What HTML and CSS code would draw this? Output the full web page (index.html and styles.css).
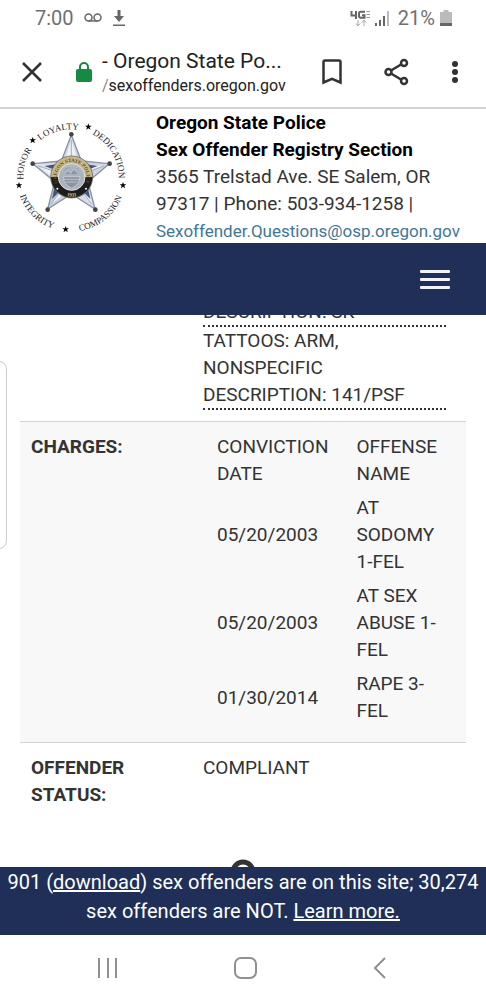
FILE: index.html
```html
<!DOCTYPE html>
<html lang="en">
<head>
  <meta charset="utf-8">
  <title>Oregon State Police - Sex Offender Registry</title>
  <meta name="viewport" content="width=device-width, initial-scale=1">
  <link rel="stylesheet" href="styles.css">
</head>
<body>
  <!-- Phone status bar -->
  <div class="status-bar">
    <span class="clock">7:00</span>
    <svg class="voicemail" width="18" height="12" viewBox="0 0 18 12"><path d="M4.500 9h9" /><circle cx="4.500" cy="5.500" r="3.500" /><circle cx="13.500" cy="5.500" r="3.500" /></svg>
    <svg class="download" width="14" height="18" viewBox="0 0 14 18"><path d="M5.500 1h3v6H12L7 13 2 7h3.500zM1 15.500h12V17H1z" /></svg>
    <span class="spacer"></span>
    <svg class="network" width="20" height="17" viewBox="0 0 20 17">
      <path d="M1.500 1v4.500H7M6 1v8M15 1.800h-4.200q-1.800 0-1.800 1.700v2.500q0 1.800 1.800 1.800h3.700V5.200h-2.500" />
      <path class="lte" d="M16.500 1.500H20M16.500 4.500H20M16.500 7.500H20" />
      <path class="arrows" d="M8 10v6M6 13.500l2 2.500 2-2.500M14 16v-6M12 12.500l2-2.500 2 2.500" />
    </svg>
    <svg class="signal" width="15" height="15" viewBox="0 0 15 15"><path d="M0 12h2v3H0zM4 9h2v6H4zM8 5h2v10H8z" /><path class="weak" d="M12 0h2v15h-2z" /></svg>
    <span class="percent">21%</span>
    <svg class="battery" width="12" height="17" viewBox="0 0 12 17"><path class="empty" d="M3.500 0h5v2H12v12H0V2h3.500z" /><path d="M0 13h12v3H0z" /></svg>
  </div>

  <!-- Browser toolbar -->
  <div class="toolbar">
    <button class="icon-button" aria-label="Close"><svg width="20" height="20" viewBox="0 0 20 20"><path d="M1 1l18 18M19 1L1 19" /></svg></button>
    <svg class="lock" width="16" height="20" viewBox="0 0 16 20"><path d="M4 8V5a4 4 0 0 1 8 0v3" /><rect x="0" y="7" width="16" height="13" rx="2" /></svg>
    <div class="address">
      <div class="page-title">- Oregon State Po...</div>
      <div class="page-url"><span>/</span>sexoffenders.oregon.gov</div>
    </div>
    <button class="icon-button" aria-label="Bookmark"><svg width="20" height="26" viewBox="0 0 20 26"><path d="M1.500 3q0-1.500 1.500-1.500h14q1.500 0 1.500 1.500v20.500L10 19.800l-8.500 3.700z" /></svg></button>
    <button class="icon-button" aria-label="Share"><svg width="26" height="28" viewBox="0 0 26 28"><path d="M7 12.500l10-6M7 15.500l10 6" /><circle cx="4.500" cy="14" r="3" /><circle cx="20" cy="5" r="3" /><circle cx="20" cy="23" r="3" /></svg></button>
    <button class="icon-button" aria-label="More"><svg class="dots" width="6" height="22" viewBox="0 0 6 22"><circle cx="3" cy="3" r="3" /><circle cx="3" cy="11" r="3" /><circle cx="3" cy="19" r="3" /></svg></button>
  </div>

  <header class="agency">
    <svg class="seal" width="114" height="114" viewBox="42 37 342 342">
      <defs>
        <path id="ring-top" d="M213 351a143 143 0 0 1 0-286a143 143 0 0 1 0 286" />
        <path id="ring-bottom" d="M213 44a164 164 0 0 0 0 328a164 164 0 0 0 0-328" />
        <path id="badge-top" d="M215 253a45 45 0 0 1 0-90a45 45 0 0 1 0 90" />
        <path id="badge-bottom" d="M215 149a59 59 0 0 0 0 118a59 59 0 0 0 0-118" />
        <path id="small-star" d="M0-10l2.500 7h7.500l-6 4.500 2.500 7.500-6.500-4.500-6.500 4.500 2.500-7.500-6-4.500h7.500z" />
        <linearGradient id="silver" x1="0" y1="0" x2="1" y2="1">
          <stop offset="0" stop-color="#f4f6fa" />
          <stop offset="0.500" stop-color="#c3cbd8" />
          <stop offset="1" stop-color="#e6eaf2" />
        </linearGradient>
      </defs>
      <g class="motto">
        <text><textPath href="#ring-top" startOffset="29.400%">HONOR</textPath></text>
        <text><textPath href="#ring-top" startOffset="45.700%">LOYALTY</textPath></text>
        <text><textPath href="#ring-top" startOffset="66.400%">DEDICATION</textPath></text>
        <text><textPath href="#ring-bottom" startOffset="37.600%">INTEGRITY</textPath></text>
        <text><textPath href="#ring-bottom" startOffset="60.800%">COMPASSION</textPath></text>
      </g>
      <use href="#small-star" x="98" y="98" />
      <use href="#small-star" x="265" y="57" />
      <use href="#small-star" x="57" y="233" />
      <use href="#small-star" x="369" y="233" />
      <use href="#small-star" x="197" y="365" />
      <!-- Star badge -->
      <path class="star" d="M214 82L244 160 328 168 264 222 285 304 214 259 143 304 164 222 99 168 184 160z" />
      <path class="facet-light" d="M214 98L236 164 214 200 192 164zM312 175L214 205 237 169zM275 290L214 205 258 219zM153 290L214 205 210 245zM115 175L214 205 170 219z" />
      <path class="facet-dark" d="M238 167l55 8-40 15zM259 218l12 56-30-30zM189 167l-55 8 40 15zM168 218l-12 56 30-30z" />
      <path class="facet-line" d="M214 98V160M312 175L264 192M275 290L245 248M153 290L183 248M115 175L166 192" />
      <g class="tips">
        <circle cx="214" cy="80" r="7" /><circle cx="329" cy="168" r="7" /><circle cx="286" cy="306" r="7" /><circle cx="143" cy="306" r="7" /><circle cx="98" cy="168" r="7" />
      </g>
      <circle class="badge-gold" cx="215" cy="208" r="63" />
      <path class="badge-black" d="M153 208a62 62 0 0 0 124 0z" />
      <circle class="badge-center" cx="215" cy="208" r="40" />
      <path class="badge-shield" d="M190 207h50q-2 25-25 35q-23-10-25-35zM194 199l10-10 8 8 9-13 15 15M190 215h50M199 223h32M186 190q12-16 29-14M244 190q-10-14-24-14" />
      <g class="badge-text">
        <text><textPath href="#badge-top" startOffset="50%">OREGON STATE POLICE</textPath></text>
        <text><textPath href="#badge-bottom" startOffset="50%">1931</textPath></text>
      </g>
      <circle cx="172" cy="243" r="3" fill="#fff" /><circle cx="258" cy="243" r="3" fill="#fff" />
    </svg>
    <div class="agency-info">
      <strong>Oregon State Police</strong><br>
      <strong>Sex Offender Registry Section</strong><br>
      3565 Trelstad Ave. SE Salem, OR<br>
      97317 | Phone: 503-934-1258 |<br>
      <a class="email" href="mailto:Sexoffender.Questions@osp.oregon.gov">Sexoffender.Questions@osp.oregon.gov</a>
    </div>
  </header>

  <nav class="site-nav">
    <button class="menu-button" aria-label="Menu"><span></span><span></span><span></span></button>
  </nav>

  <main class="content">
    <div class="edge-panel"></div>
    <div class="record">
      <div class="row marks-row">
        <div class="label"></div>
        <div class="value">
          <div class="mark">DESCRIPTION: SK</div>
          <div class="mark">TATTOOS: ARM,<br>NONSPECIFIC<br>DESCRIPTION: 141/PSF</div>
        </div>
      </div>
      <div class="row charges-row">
        <div class="label">CHARGES:</div>
        <div class="value">
          <table class="charges">
            <tr><th>CONVICTION DATE</th><th>OFFENSE NAME</th></tr>
            <tr><td>05/20/2003</td><td>AT<br>SODOMY 1-FEL</td></tr>
            <tr><td>05/20/2003</td><td>AT SEX ABUSE 1-FEL</td></tr>
            <tr><td>01/30/2014</td><td>RAPE 3-FEL</td></tr>
          </table>
        </div>
      </div>
      <div class="row">
        <div class="label">OFFENDER STATUS:</div>
        <div class="value">COMPLIANT</div>
      </div>
    </div>
    <svg class="spinner" width="26" height="26" viewBox="0 0 26 26"><circle cx="13" cy="13" r="10" /></svg>
  </main>

  <footer class="notice">
    901 (<a href="#download">download</a>) sex offenders are on this site; 30,274 sex offenders are NOT. <a href="#learn">Learn more.</a>
  </footer>

  <!-- Phone navigation keys -->
  <div class="phone-keys">
    <button class="key" aria-label="Recents"><svg width="22" height="22" viewBox="0 0 22 22"><path d="M2 1v20M11 1v20M19 1v20" /></svg></button>
    <button class="key" aria-label="Home"><svg width="24" height="22" viewBox="0 0 24 22"><rect x="1" y="1" width="21" height="20" rx="6" /></svg></button>
    <button class="key" aria-label="Back"><svg width="14" height="22" viewBox="0 0 14 22"><path d="M12 1L2 11l10 10" /></svg></button>
  </div>
</body>
</html>
```
FILE: styles.css
```css
* {
  box-sizing: border-box;
}

body {
  margin: 0;
  height: 100vh;
  display: flex;
  flex-direction: column;
  overflow: hidden;
  background: #fff;
  color: #333;
  font-family: Roboto, Arial, sans-serif;
  font-size: 19px;
  line-height: 27px;
}

button {
  padding: 0;
  border: 0;
  background: none;
}

svg {
  display: block;
}

/* Status bar */
.status-bar {
  display: flex;
  align-items: center;
  height: 36px;
  padding: 0 34px 0 35px;
  color: #707070;
  fill: #666;
  font-size: 20px;
}

.voicemail {
  margin: 0 10px;
  fill: none;
  stroke: #666;
  stroke-width: 1.5;
}

.spacer {
  flex: 1;
}

.network {
  fill: none;
  stroke: #666;
  stroke-width: 2;
}

.lte {
  stroke: #999;
  stroke-width: 1;
}

.arrows {
  stroke: #aaa;
  stroke-width: 1;
}

.signal {
  margin: 0 8px 0 5px;
}

.weak,
.empty {
  fill: #bbb;
}

.battery {
  margin-left: 5px;
}

/* Browser toolbar */
.toolbar {
  display: flex;
  align-items: center;
  height: 73px;
  padding: 0 28px 0 22px;
  border-bottom: 2px solid #d4d4d4;
}

.icon-button svg {
  fill: none;
  stroke: #333;
  stroke-width: 2.5;
}

.icon-button .dots {
  fill: #333;
  stroke: none;
}

.lock {
  margin: 0 10px 0 34px;
  fill: #168a42;
}

.lock path {
  fill: none;
  stroke: #168a42;
  stroke-width: 2;
}

.address {
  flex: 1;
  padding-top: 1px;
  color: #222;
  white-space: nowrap;
}

.page-title {
  font-size: 21px;
}

.page-url {
  font-size: 16px;
  line-height: 22px;
}

.page-url span {
  color: #888;
}

.toolbar .icon-button + .icon-button {
  margin-left: 42px;
}

/* Agency header */
.agency {
  display: flex;
  height: 134px;
  padding-left: 14px;
  background: #fff;
}

.seal {
  flex: none;
  margin: 11px 28px 0 0;
}

.motto {
  font-family: "Liberation Serif", serif;
  font-size: 27px;
  text-anchor: middle;
  fill: #222;
}

.star {
  fill: url(#silver);
  stroke: #8791a5;
  stroke-width: 4;
}

.facet-dark {
  fill: #42577c;
}

.facet-light {
  fill: #eef1f6;
}

.facet-line {
  fill: none;
  stroke: #a3adbf;
  stroke-width: 3;
}

.tips {
  fill: #444;
}

.badge-gold {
  fill: #c8b98a;
  stroke: #555;
  stroke-width: 2;
}

.badge-black {
  fill: #1d1d1f;
}

.badge-center {
  fill: #aab2bd;
  stroke: #e4e4de;
  stroke-width: 3;
}

.badge-shield {
  fill: #8b94a2;
  stroke: #d3d8df;
  stroke-width: 2;
}

.badge-text {
  font-family: "Liberation Serif", serif;
  font-size: 15px;
  font-weight: bold;
  text-anchor: middle;
  fill: #5e4a12;
}

.badge-text text:last-child {
  fill: #e3cf7c;
}

.agency-info {
  white-space: nowrap;
}

.agency-info strong {
  color: #000;
}

.email {
  color: #3f7796;
  font-size: 17px;
  text-decoration: none;
}

/* Blue site bar */
.site-nav {
  display: flex;
  align-items: center;
  justify-content: flex-end;
  height: 72px;
  padding-right: 36px;
  background: #202f58;
}

.menu-button {
  display: flex;
  flex-direction: column;
  gap: 5px;
}

.menu-button span {
  width: 30px;
  height: 3px;
  border-radius: 1px;
  background: #f0f4fa;
}

/* Offender record */
.content {
  position: relative;
  flex: 1;
  min-height: 0;
  overflow: hidden;
}

.edge-panel {
  position: absolute;
  top: 46px;
  left: -12px;
  width: 19px;
  height: 188px;
  border: 1px solid #ccc;
  border-radius: 8px;
}

.record {
  margin: -17px 20px 0;
}

.row {
  display: grid;
  grid-template-columns: 172px 1fr;
  padding: 11px;
  border-bottom: 1px solid #d4d4d4;
}

.row:last-child {
  border-bottom: 0;
}

.marks-row {
  padding-top: 0;
}

.label {
  padding-right: 40px;
  font-weight: bold;
}

.value {
  padding-right: 9px;
}

.mark {
  border-bottom: 2px dotted #333;
}

.charges-row {
  background: #f8f8f8;
}

.charges {
  border-spacing: 0;
}

.charges th,
.charges td {
  padding: 0 14px 7px;
  text-align: left;
  font-weight: normal;
}

.spinner {
  margin: 40px auto 0;
  fill: none;
  stroke: #333;
  stroke-width: 5;
}

/* Footer notice */
.notice {
  height: 68px;
  padding-top: 1px;
  background: #202f58;
  color: #fff;
  font-size: 20px;
  text-align: center;
  line-height: 29px;
}

.notice a {
  color: #fff;
}

/* Phone keys */
.phone-keys {
  display: flex;
  align-items: center;
  justify-content: space-between;
  height: 65px;
  padding: 0 99px 0 97px;
}

.key svg {
  fill: none;
  stroke: #909090;
  stroke-width: 2;
}
```
